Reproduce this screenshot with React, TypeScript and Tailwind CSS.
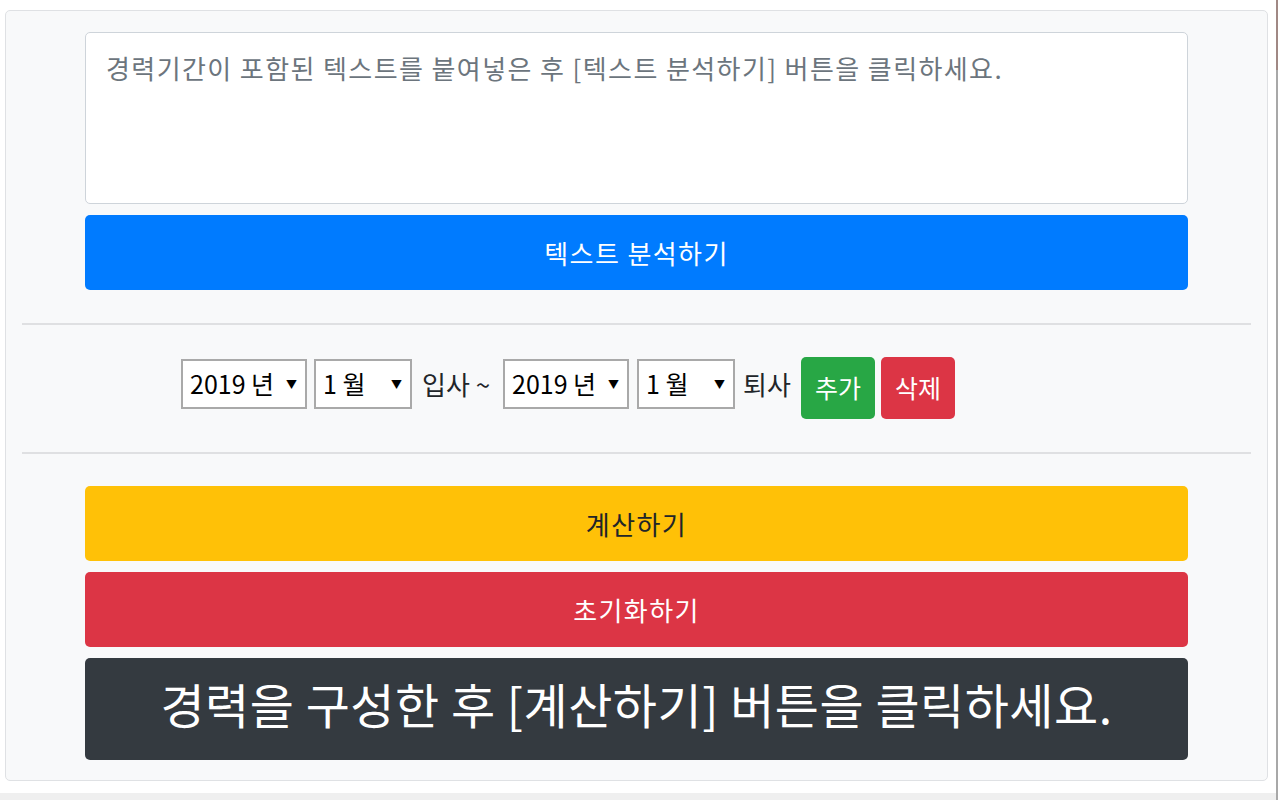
const font = { fontFamily: '"Noto Sans CJK KR", "Noto Sans", sans-serif' };

function FakeSelect({ value, width }: { value: string; width: string }) {
  return (
    <div
      className={`${width} mt-[2px] h-[50px] flex items-center justify-between border-2 border-[#a9a9a9] bg-white pl-[7px] pr-[8px] text-[25px] text-black`}
    >
      <span>{value}</span>
      <span className="text-[11px] leading-none">▼</span>
    </div>
  );
}

function Divider() {
  return <div className="h-[2px] bg-[#dfe0e2]" />;
}

export default function App() {
  return (
    <div className="w-[1280px] h-[800px] flex bg-white overflow-hidden" style={font}>
      <div className="w-[1276px] flex flex-col">
        <div className="flex-1 pt-[10px] pl-[5px]">
          <div className="w-[1263px] rounded-[5px] border border-[#dfe1e4] bg-[#f8f9fa] px-[16px] pt-[21px] pb-[20px]">
            <div className="px-[63px] flex flex-col">
              <textarea
                readOnly
                className="h-[172px] w-full resize-none rounded-[5px] border border-[#ced4da] bg-white px-[20px] pt-[16px] text-[26px] tracking-[1.4px] leading-[38px] text-[#495057] placeholder:text-[#6c757d] outline-none"
                placeholder="경력기간이 포함된 텍스트를 붙여넣은 후 [텍스트 분석하기] 버튼을 클릭하세요."
              />
              <button className="mt-[11px] h-[75px] w-full rounded-[5px] bg-[#007bff] text-[26px] tracking-[1.4px] text-white">
                텍스트 분석하기
              </button>
            </div>

            <div className="mt-[33px]">
              <Divider />
            </div>

            <div className="mt-[32px] h-[62px] pl-[159px] flex items-start text-[26px] text-[#212529]">
              <FakeSelect value="2019 년" width="w-[126px]" />
              <div className="ml-[7px]">
                <FakeSelect value="1 월" width="w-[98px]" />
              </div>
              <span className="ml-[10px] mt-[2px] w-[73px] whitespace-nowrap leading-[50px]">입사 ~</span>
              <div className="ml-[8px]">
                <FakeSelect value="2019 년" width="w-[126px]" />
              </div>
              <div className="ml-[8px]">
                <FakeSelect value="1 월" width="w-[98px]" />
              </div>
              <span className="ml-[8px] mt-[2px] w-[50px] whitespace-nowrap leading-[50px]">퇴사</span>
              <button className="ml-[8px] h-[62px] w-[74px] rounded-[5px] bg-[#28a745] text-[25px] text-white">
                추가
              </button>
              <button className="ml-[6px] h-[62px] w-[74px] rounded-[5px] bg-[#dc3545] text-[25px] text-white">
                삭제
              </button>
            </div>

            <div className="mt-[33px]">
              <Divider />
            </div>

            <div className="px-[63px] mt-[32px] flex flex-col gap-[11px]">
              <button className="h-[75px] w-full rounded-[5px] bg-[#ffc107] text-[26px] tracking-[1.4px] text-[#212529]">
                계산하기
              </button>
              <button className="h-[75px] w-full rounded-[5px] bg-[#dc3545] text-[26px] tracking-[1.4px] text-white">
                초기화하기
              </button>
              <div className="h-[102px] w-full rounded-[5px] bg-[#343a40] pb-[12px] flex items-center justify-center text-[48px] tracking-[0.5px] text-white">
                경력을 구성한 후 [계산하기] 버튼을 클릭하세요.
              </div>
            </div>
          </div>
        </div>
        <div className="h-[7px] bg-[#efefef]" />
      </div>
      <div className="w-[2px] flex flex-col">
        <div className="h-[70px] bg-[#a08884]" />
        <div className="flex-1 bg-[#a8a8a8]" />
      </div>
    </div>
  );
}
